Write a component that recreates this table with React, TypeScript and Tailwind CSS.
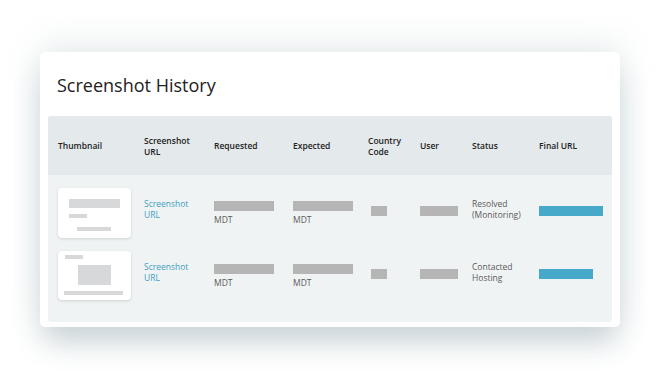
import React from 'react';

interface HistoryRow {
  id: number;
  thumb: 'article' | 'page';
  status: [string, string];
  finalWidth: number;
}

const rows: HistoryRow[] = [
  { id: 1, thumb: 'article', status: ['Resolved', '(Monitoring)'], finalWidth: 64 },
  { id: 2, thumb: 'page', status: ['Contacted', 'Hosting'], finalWidth: 54 },
];

const cols = 'grid grid-cols-[86px_70px_79px_75px_52px_52px_67px_1fr]';

const Thumbnail: React.FC<{ kind: HistoryRow['thumb'] }> = ({ kind }) => {
  if (kind === 'article') {
    return (
      <div className="w-[73px] h-[50px] bg-white rounded-sm shadow-[0_1px_3px_rgba(0,0,0,0.14)] flex flex-col pt-[11px] pl-[11px]">
        <div className="w-[51px] h-[9px] bg-[#d6d8da]" />
        <div className="w-[18px] h-[4px] bg-[#d6d8da] mt-[6px]" />
        <div className="w-[34px] h-[4px] bg-[#d6d8da] mt-[9px] ml-[8px]" />
      </div>
    );
  }
  return (
    <div className="w-[73px] h-[49px] bg-white rounded-sm shadow-[0_1px_3px_rgba(0,0,0,0.14)] flex flex-col pt-[4px] pl-[6px]">
      <div className="w-[18px] h-[4px] bg-[#d6d8da] ml-[1px]" />
      <div className="w-[33px] h-[20px] bg-[#d6d8da] mt-[6px] ml-[14px]" />
      <div className="w-[59px] h-[4px] bg-[#d6d8da] mt-[6px]" />
    </div>
  );
};

const Bar: React.FC<{ w: number; color?: string }> = ({ w, color = 'bg-[#b5b5b5]' }) => (
  <div className={`h-[10px] ${color}`} style={{ width: w }} />
);

export default function App() {
  return (
    <div className="w-[660px] h-[380px] bg-white flex justify-center pt-[52px] font-['Open_Sans',sans-serif]">
      <div className="w-[580px] h-[275px] bg-white rounded-[5px] shadow-[0_-8px_34px_rgba(205,214,218,0.45),0_18px_30px_-4px_rgba(196,207,211,0.95)] flex flex-col px-[8px] pb-[5px]">
        <h1 className="text-[18px] leading-none text-[#222] pl-[9px] pt-[24px] h-[64px]">Screenshot History</h1>
        <div className="flex-1 rounded-[3px] overflow-hidden bg-[#f0f3f4] flex flex-col">
          <div className={`${cols} h-[59px] items-center bg-[#e4e9eb] pl-[10px] text-[8.5px] leading-[11px] font-semibold text-[#222]`}>
            <div>Thumbnail</div>
            <div>Screenshot<br />URL</div>
            <div>Requested</div>
            <div>Expected</div>
            <div>Country<br />Code</div>
            <div>User</div>
            <div>Status</div>
            <div>Final URL</div>
          </div>
          <div className="flex flex-col gap-[13px] pt-[13px] pl-[10px] text-[8.5px] leading-[11px] text-[#5a5a5a]">
            {rows.map((row) => (
              <div key={row.id} className={`${cols} items-start`}>
                <Thumbnail kind={row.thumb} />
                <div className="mt-[10px] text-[#3d9fc2]">Screenshot<br />URL</div>
                <div className="mt-[13px] flex flex-col gap-[3px]">
                  <Bar w={60} />
                  <span>MDT</span>
                </div>
                <div className="mt-[13px] flex flex-col gap-[3px]">
                  <Bar w={60} />
                  <span>MDT</span>
                </div>
                <div className="mt-[18px] pl-[3px]">
                  <Bar w={16} />
                </div>
                <div className="mt-[18px]">
                  <Bar w={38} />
                </div>
                <div className="mt-[10px]">
                  {row.status[0]}<br />{row.status[1]}
                </div>
                <div className="mt-[18px]">
                  <Bar w={row.finalWidth} color="bg-[#46a9c9]" />
                </div>
              </div>
            ))}
          </div>
        </div>
      </div>
    </div>
  );
}
